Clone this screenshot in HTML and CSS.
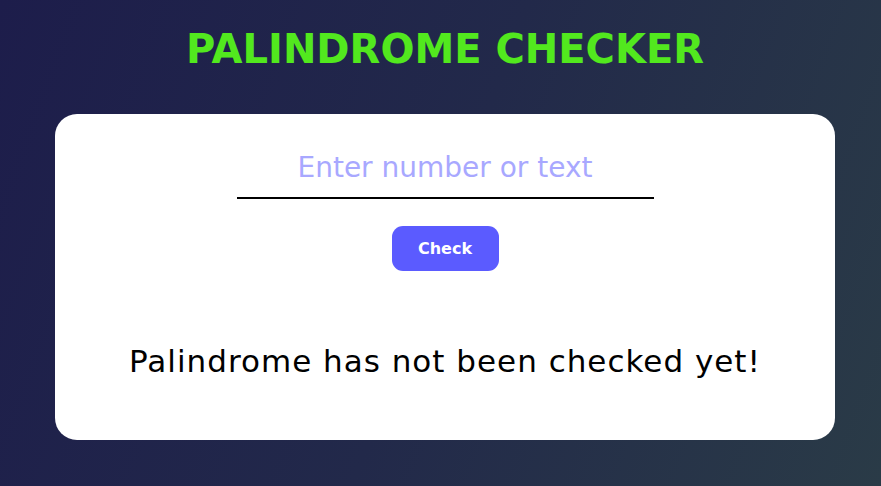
FILE: index.html
```html
<!DOCTYPE html>
<html lang="en">
<head>
<meta charset="utf-8">
<title>Palindrome Checker</title>
<link rel="stylesheet" href="styles.css">
</head>
<body>
<main class="page">
  <h1 class="title">PALINDROME CHECKER</h1>
  <section class="card">
    <input class="text-input" type="text" placeholder="Enter number or text">
    <button class="check-btn" type="button">Check</button>
    <p class="result">Palindrome has not been checked yet!</p>
  </section>
</main>
</body>
</html>
```
FILE: styles.css
```css
* { box-sizing: border-box; }
html, body { margin: 0; padding: 0; }
body {
  min-height: 486px;
  background: linear-gradient(110deg, #1d1d4b 0%, #22294a 50%, #2a3b47 100%);
  font-family: "DejaVu Sans", sans-serif;
}
.page {
  display: flex;
  flex-direction: column;
  align-items: center;
  padding: 24px 0 0 9px;
}
.title {
  margin: 0;
  color: #52e81e;
  font-family: "DejaVu Sans", sans-serif;
  font-weight: 700;
  font-size: 40px;
  line-height: 50px;
}
.card {
  margin-top: 40px;
  width: 780px;
  height: 326px;
  background: #fff;
  border-radius: 22px;
  display: flex;
  flex-direction: column;
  align-items: center;
  padding-top: 30px;
}
.text-input {
  width: 417px;
  height: 55px;
  padding: 0 0 6px;
  border: none;
  border-bottom: 2px solid #000;
  outline: none;
  text-align: center;
  font-family: "DejaVu Sans", sans-serif;
  font-size: 28px;
  color: #000;
  background: transparent;
}
.text-input::placeholder { color: #a8a8ff; }
.check-btn {
  margin-top: 27px;
  width: 107px;
  height: 45px;
  border: none;
  border-radius: 11px;
  background: #5b5bff;
  color: #fff;
  font-family: "DejaVu Sans", sans-serif;
  font-weight: 700;
  font-size: 16px;
}
.result {
  margin: 72px 0 0;
  font-family: "DejaVu Sans", sans-serif;
  font-size: 31px;
  letter-spacing: 1px;
  color: #000;
}
```
